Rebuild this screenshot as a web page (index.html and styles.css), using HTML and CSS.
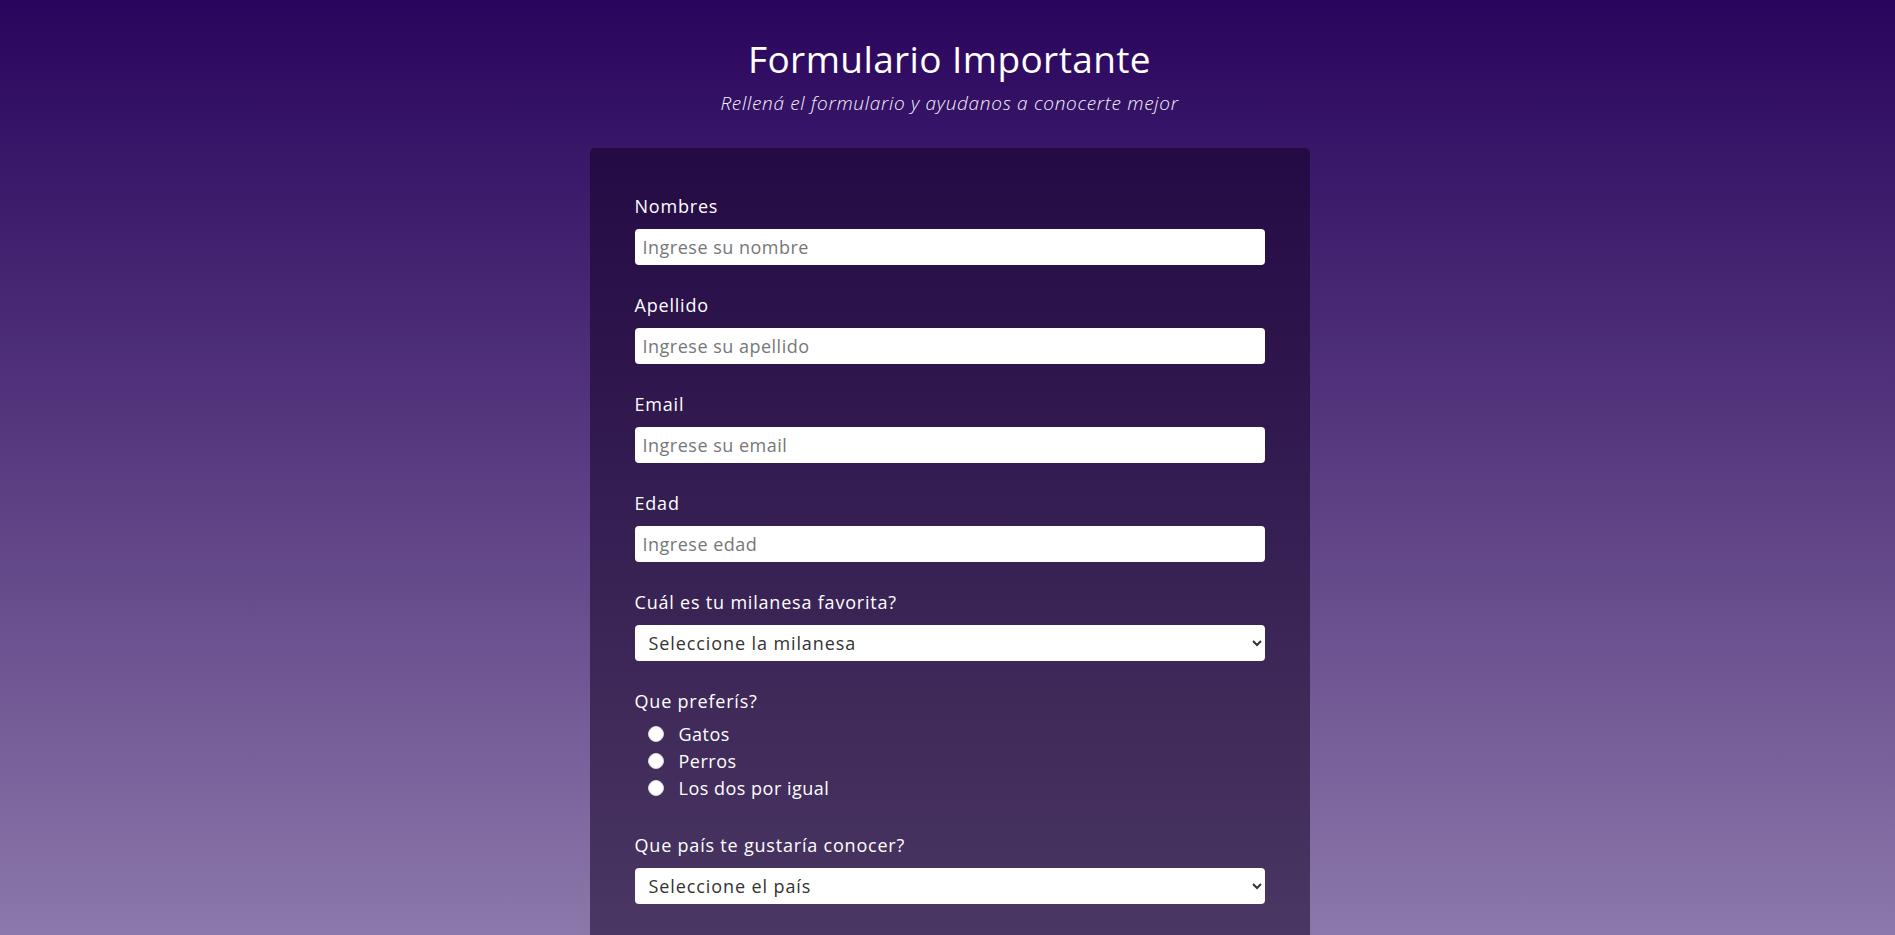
FILE: index.html
```html
<!DOCTYPE html>
<html lang="es">
<head>
<meta charset="utf-8">
<title>Formulario Importante</title>
<link rel="stylesheet" href="styles.css">
</head>
<body>
<div class="page">
  <header class="header">
    <h1 class="title">Formulario Importante</h1>
    <p class="subtitle">Rellená el formulario y ayudanos a conocerte mejor</p>
  </header>
  <form class="card">
    <div class="group">
      <label class="label" for="nombre">Nombres</label>
      <input class="field" id="nombre" type="text" placeholder="Ingrese su nombre">
    </div>
    <div class="group">
      <label class="label" for="apellido">Apellido</label>
      <input class="field" id="apellido" type="text" placeholder="Ingrese su apellido">
    </div>
    <div class="group">
      <label class="label" for="email">Email</label>
      <input class="field" id="email" type="email" placeholder="Ingrese su email">
    </div>
    <div class="group">
      <label class="label" for="edad">Edad</label>
      <input class="field" id="edad" type="number" placeholder="Ingrese edad">
    </div>
    <div class="group">
      <label class="label" for="milanesa">Cuál es tu milanesa favorita?</label>
      <select class="field select" id="milanesa">
        <option>Seleccione la milanesa</option>
      </select>
    </div>
    <div class="group group-radio">
      <span class="label">Que preferís?</span>
      <div class="radios">
        <label class="radio-row"><input class="radio" type="radio" name="mascota"><span>Gatos</span></label>
        <label class="radio-row"><input class="radio" type="radio" name="mascota"><span>Perros</span></label>
        <label class="radio-row"><input class="radio" type="radio" name="mascota"><span>Los dos por igual</span></label>
      </div>
    </div>
    <div class="group">
      <label class="label" for="pais">Que país te gustaría conocer?</label>
      <select class="field select" id="pais">
        <option>Seleccione el país</option>
      </select>
    </div>
  </form>
</div>
</body>
</html>
```

FILE: styles.css
```css
html, body {
  margin: 0;
  padding: 0;
  height: 100%;
}
body {
  font-family: "Open Sans", "Noto Sans", sans-serif;
  color: #ffffff;
  background: linear-gradient(to bottom, #29055d 0%, #4f3079 40%, #8c78aa 100%);
  background-attachment: fixed;
  overflow: hidden;
}
.page {
  display: flex;
  flex-direction: column;
  align-items: center;
  padding-top: 33px;
  padding-left: 4px;
}
.header {
  text-align: center;
}
.title {
  margin: 0;
  font-size: 37px;
  font-weight: 400;
  line-height: 52px;
  letter-spacing: 0.4px;
}
.subtitle {
  margin: 5px 0 0;
  font-size: 19px;
  font-style: italic;
  font-weight: 300;
  line-height: 26px;
  letter-spacing: 0.7px;
  color: #f6f2fb;
}
.card {
  margin-top: 32px;
  width: 720px;
  box-sizing: border-box;
  padding: 46px 45px 80px;
  border-radius: 5px;
  background: rgba(20, 2, 40, 0.55);
  display: flex;
  flex-direction: column;
  gap: 28px;
}
.group {
  display: flex;
  flex-direction: column;
}
.label {
  display: block;
  font-size: 18px;
  line-height: 24px;
  letter-spacing: 0.8px;
  margin-bottom: 11px;
  color: #ffffff;
}
.field {
  height: 36px;
  box-sizing: border-box;
  width: 100%;
  border: none;
  border-radius: 4px;
  background: #ffffff;
  padding: 0 8px;
  font-family: "Open Sans", "Noto Sans", sans-serif;
  font-size: 18px;
  letter-spacing: 0.5px;
  color: #333333;
  outline: none;
}
.field::placeholder {
  color: #777777;
}
.select {
  padding: 0 8px 0 10px;
  letter-spacing: 0.9px;
  color: #333333;
}
.group-radio {
  margin-bottom: 4px;
}
.group-radio .label {
  margin-bottom: 7px;
}
.radios {
  display: flex;
  flex-direction: column;
  padding-left: 13px;
}
.radio-row {
  display: flex;
  align-items: center;
  height: 27px;
  font-size: 18px;
  letter-spacing: 0.5px;
  gap: 15px;
}
.radio {
  appearance: none;
  -webkit-appearance: none;
  margin: 0;
  width: 16px;
  height: 16px;
  border-radius: 50%;
  background: #ffffff;
  border: 1px solid #d8d8d8;
  box-sizing: border-box;
}
```
